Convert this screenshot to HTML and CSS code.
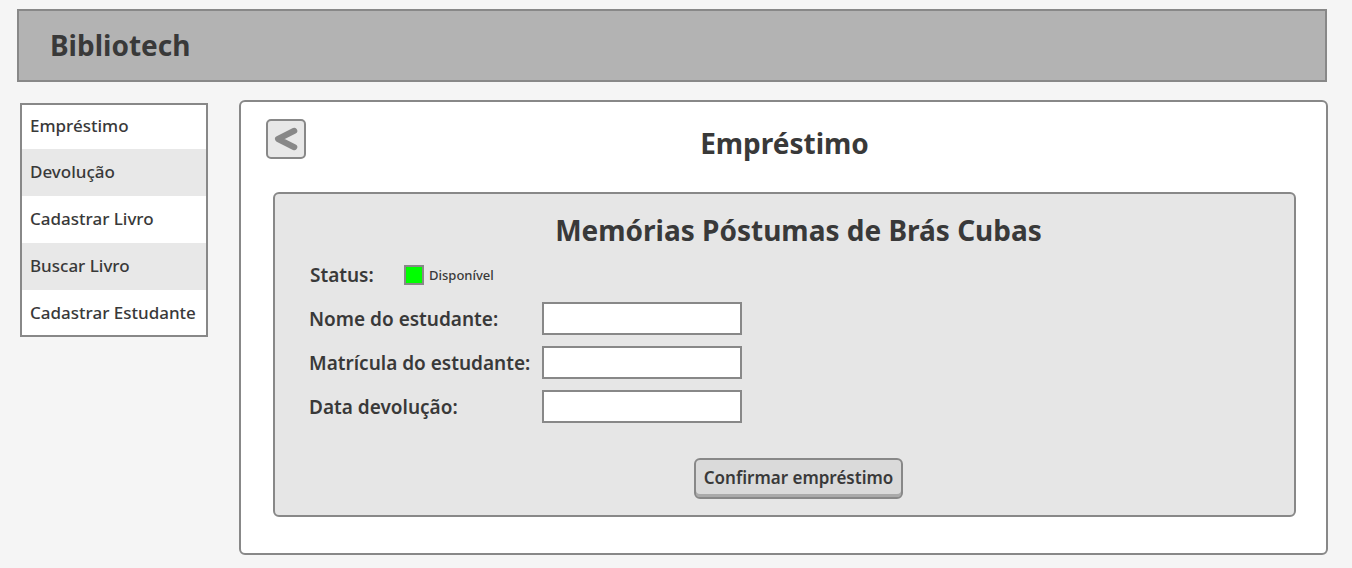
FILE: index.html
```html
<!DOCTYPE html>
<html lang="pt-BR">
<head>
<meta charset="utf-8">
<meta name="viewport" content="width=device-width, initial-scale=1">
<title>Bibliotech</title>
<link rel="stylesheet" href="styles.css">
</head>
<body>
<header class="topbar">
  <h1 class="brand">Bibliotech</h1>
</header>
<div class="layout">
  <nav class="menu" aria-label="Menu principal">
    <a class="menu-item" href="#emprestimo">Empréstimo</a>
    <a class="menu-item" href="#devolucao">Devolução</a>
    <a class="menu-item" href="#cadastrar-livro">Cadastrar Livro</a>
    <a class="menu-item" href="#buscar-livro">Buscar Livro</a>
    <a class="menu-item" href="#cadastrar-estudante">Cadastrar Estudante</a>
  </nav>
  <main class="panel">
    <div class="panel-head">
      <button class="back" type="button" aria-label="Voltar">
        <svg class="back-icon" viewBox="0 0 36 36" aria-hidden="true">
          <path d="M26.300 9.800 10 18 26.300 26.200" fill="none" stroke="#888" stroke-width="6" stroke-linecap="round" stroke-linejoin="round"/>
        </svg>
      </button>
      <h2 class="title">Empréstimo</h2>
    </div>
    <form class="card">
      <h2 class="title">Memórias Póstumas de Brás Cubas</h2>
      <div class="status">
        <span class="label">Status:</span>
        <span class="status-box"></span>
        <span class="status-text">Disponível</span>
      </div>
      <div class="fields">
        <label class="label" for="nome">Nome do estudante:</label>
        <input class="field" id="nome" type="text">
        <label class="label" for="matricula">Matrícula do estudante:</label>
        <input class="field" id="matricula" type="text">
        <label class="label" for="data">Data devolução:</label>
        <input class="field" id="data" type="text">
      </div>
      <button class="confirm" type="button">Confirmar empréstimo</button>
    </form>
  </main>
</div>
</body>
</html>
```
FILE: styles.css
```css
* {
  box-sizing: border-box;
}

body {
  margin: 0;
  padding: 9px 24px 13px 17px;
  background: #f5f5f5;
  color: #393939;
  font-family: "Noto Sans", sans-serif;
}

.topbar {
  margin-right: 1px;
  padding: 16px 31px 17px;
  border: 2px solid #888;
  background: #b3b3b3;
}

.brand,
.title {
  margin: 0;
  font-size: 28px;
  line-height: 36px;
  font-weight: 700;
}

.layout {
  display: flex;
  align-items: flex-start;
  gap: 31px;
  margin-top: 18px;
  padding-left: 3px;
}

.menu {
  display: flex;
  flex: none;
  flex-direction: column;
  width: 188px;
  margin-top: 3px;
  border: 2px solid #888;
  background: #fff;
}

.menu-item {
  padding: 11px 8px 12px;
  color: inherit;
  font-size: 17px;
  line-height: 24px;
  font-weight: 500;
  text-decoration: none;
  white-space: nowrap;
}

.menu-item:first-child {
  padding: 9px 8px 11px;
}

.menu-item:last-child {
  padding-bottom: 10px;
}

.menu-item:nth-child(even) {
  background: #e8e8e8;
}

.panel {
  flex: 1;
  min-width: 0;
  padding: 17px 30px 36px 32px;
  border: 2px solid #888;
  border-radius: 6px;
  background: #fff;
}

.panel-head {
  display: grid;
  grid-template-columns: 40px 1fr 40px;
  align-items: start;
  margin: 0 -7px;
}

.panel-head .title {
  padding-top: 6px;
  text-align: center;
}

.back {
  width: 40px;
  height: 40px;
  padding: 0;
  border: 2px solid #888;
  border-radius: 5px;
  background: #e8e8e8;
}

.back-icon {
  display: block;
  width: 36px;
  height: 36px;
}

.card {
  display: flex;
  flex-direction: column;
  margin-top: 31px;
  padding: 18px 6px 16px 34px;
  border: 2px solid #888;
  border-radius: 6px;
  background: #e6e6e6;
}

.card .title {
  text-align: center;
}

.status {
  display: flex;
  align-items: center;
  margin-top: 15px;
}

.status .label {
  width: 95px;
  padding-left: 1px;
}

.label {
  font-size: 19px;
  line-height: 24px;
  font-weight: 600;
  white-space: nowrap;
}

.status-box {
  width: 20px;
  height: 20px;
  border: 2px solid #888;
  background: #0f0;
}

.status-text {
  margin-left: 5px;
  font-size: 13px;
  line-height: 20px;
  font-weight: 500;
}

.fields {
  display: grid;
  grid-template-columns: 223px 200px;
  align-items: center;
  gap: 11px 10px;
  margin-top: 15px;
}

.field {
  width: 100%;
  height: 33px;
  padding: 0 6px;
  border: 2px solid #888;
  border-radius: 0;
  background: #fff;
  color: inherit;
  font: 500 17px "Noto Sans", sans-serif;
}

.confirm {
  align-self: center;
  margin-top: 35px;
  padding: 6px 8px 7px;
  border: 2px solid #888;
  border-radius: 6px;
  background: #dadada;
  box-shadow: inset 0 -3px #aaa;
  color: inherit;
  font: 600 17px/24px "Noto Sans", sans-serif;
  white-space: nowrap;
}
```
